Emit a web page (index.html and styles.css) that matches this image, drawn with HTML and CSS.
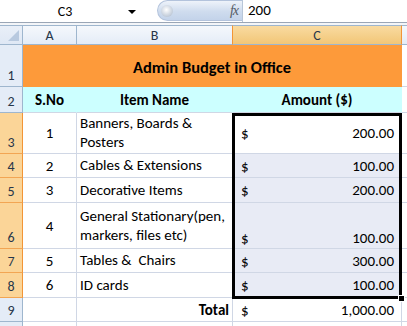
FILE: index.html
```html
<!DOCTYPE html>
<html>
<head>
<meta charset="utf-8">
<link rel="stylesheet" href="styles.css">
</head>
<body>
<div class="app">
  <div class="fbar">
    <div class="namebox"><span class="ref">C3</span><span class="arrow"></span></div>
    <div class="fxbtn"><span class="knob"></span><span class="fx">fx</span></div>
    <div class="formula">200</div>
  </div>
  <div class="gap"></div>
  <div class="stack">
  <div class="sheet">
    <div class="corner"><span class="tri"></span></div>
    <div class="ch">A</div>
    <div class="ch">B</div>
    <div class="ch sel">C</div>
    <div class="ch last"></div>

    <div class="rh">1</div>
    <div class="cell title">Admin Budget in Office</div>
    <div class="cell blank"></div>

    <div class="rh">2</div>
    <div class="cell hdr ctr">S.No</div>
    <div class="cell hdr ctr">Item Name</div>
    <div class="cell hdr ctr">Amount ($)</div>
    <div class="cell blank"></div>

    <div class="rh sel">3</div>
    <div class="cell ctr">1</div>
    <div class="cell txt">Banners, Boards &amp;<br>Posters</div>
    <div class="cell money active"><span>$</span><span>200.00</span></div>
    <div class="cell blank"></div>

    <div class="rh sel">4</div>
    <div class="cell ctr">2</div>
    <div class="cell txt">Cables &amp; Extensions</div>
    <div class="cell money inrange"><span>$</span><span>100.00</span></div>
    <div class="cell blank"></div>

    <div class="rh sel">5</div>
    <div class="cell ctr">3</div>
    <div class="cell txt">Decorative Items</div>
    <div class="cell money inrange"><span>$</span><span>200.00</span></div>
    <div class="cell blank"></div>

    <div class="rh sel">6</div>
    <div class="cell ctr">4</div>
    <div class="cell txt">General Stationary(pen,<br>markers, files etc)</div>
    <div class="cell money inrange bottom"><span>$</span><span>100.00</span></div>
    <div class="cell blank"></div>

    <div class="rh sel">7</div>
    <div class="cell ctr">5</div>
    <div class="cell txt">Tables &amp;&nbsp; Chairs</div>
    <div class="cell money inrange"><span>$</span><span>300.00</span></div>
    <div class="cell blank"></div>

    <div class="rh sel">8</div>
    <div class="cell ctr">6</div>
    <div class="cell txt">ID cards</div>
    <div class="cell money inrange"><span>$</span><span>100.00</span></div>
    <div class="cell blank"></div>

    <div class="rh">9</div>
    <div class="cell"></div>
    <div class="cell total">Total</div>
    <div class="cell money"><span>$</span><span>1,000.00</span></div>
    <div class="cell blank"></div>

    <div class="rh"></div>
    <div class="cell"></div>
    <div class="cell"></div>
    <div class="cell"></div>
    <div class="cell blank"></div>
  </div>
  <div class="sheet overlay">
    <div class="selbox"><span class="handle"></span></div>
  </div>
  </div>
</div>
</body>
</html>
```
FILE: styles.css
```css
* { box-sizing: border-box; }
html, body { margin: 0; padding: 0; background: #fff; }
.app {
  width: 407px; height: 326px; overflow: hidden;
  font-family: "Carlito", "Lato", "Liberation Sans", sans-serif;
  font-size: 15px; color: #000;
}
.fbar {
  display: flex; height: 22px;
  background: #fff;
}
.namebox {
  width: 152px; position: relative;
  display: flex; align-items: center;
  padding-right: 16px;
}
.ref { flex: 1; text-align: center; font-size: 14px; padding-left: 2px; }
.arrow {
  width: 0; height: 0;
  border-left: 4px solid transparent; border-right: 4px solid transparent;
  border-top: 4px solid #000;
  margin-top: 2px;
}
.fxbtn {
  width: 85px; margin-left: 5px; height: 21px;
  border-radius: 11px 0 0 11px;
  background: linear-gradient(#eef3fa, #cfdcee 55%, #c3d3ea);
  border: 1px solid #b3c3dc; border-right: none;
  display: flex; align-items: center; justify-content: space-between;
  padding: 0 4px 0 3px;
}
.knob {
  width: 12px; height: 12px; border-radius: 50%;
  background: radial-gradient(circle at 45% 40%, #fff, #c9d2de 60%, #a9b5c6);
}
.fx {
  font-family: "Liberation Serif", serif; font-style: italic;
  font-size: 14px; color: #555c66; letter-spacing: -1px;
}
.formula {
  flex: 1; border-left: 1px solid #b8c6d8;
  padding-left: 5px; font-size: 15px; line-height: 21px;
}
.gap {
  height: 3px; border-top: 1px solid #9aa6b6; background: #f3f5f8;
}
.stack { display: grid; }
.stack > .sheet { grid-area: 1 / 1; }
.sheet {
  display: grid;
  grid-template-columns: 23px 54px 156px 169px 5px;
  grid-template-rows: 20px 42px 26px 41px 24px 25px 46px 24px 25px 24px 10px;
}
.overlay { pointer-events: none; }
.corner {
  background: linear-gradient(#e9eff8, #dfe8f5);
  border-right: 1px solid #9eb6ce; border-bottom: 1px solid #9eb6ce;
  border-top: 1px solid #9eb6ce;
  position: relative;
}
.tri {
  position: absolute; right: 3px; bottom: 3px;
  width: 0; height: 0;
  border-left: 11px solid transparent;
  border-bottom: 11px solid #b8c9df;
}
.ch {
  background: linear-gradient(#f5f8fc, #e4ecf7);
  border-right: 1px solid #9eb6ce; border-bottom: 1px solid #9eb6ce;
  border-top: 1px solid #9eb6ce;
  display: flex; align-items: center; justify-content: center;
  font-size: 14px; color: #27364a;
}
.ch.sel {
  background: linear-gradient(#f9dba1, #f2c677);
  border-right-color: #f29536; border-left: 1px solid #f29536;
  margin-left: -1px;
}
.ch.last { border-right: none; }
.rh {
  background: #e4ecf7;
  border-right: 1px solid #9eb6ce; border-bottom: 1px solid #9eb6ce;
  display: flex; align-items: flex-end; justify-content: center;
  padding-bottom: 2px; font-size: 14px; color: #27364a;
}
.rh.sel {
  background: #fbd598;
  border-right-color: #f29536; border-bottom-color: #f2a553;
}
.cell {
  border-right: 1px solid #d0d7e5; border-bottom: 1px solid #d0d7e5;
  display: flex; align-items: center;
}
.cell.blank { border-right: none; }
.title {
  grid-column: 2 / 5;
  background: #fd9a3a;
  border-color: #fd9a3a;
  justify-content: center; font-weight: bold; font-size: 16.5px;
  padding-top: 2px;
}
.hdr { background: #ccffff; font-weight: bold; border-right-color: #ccffff; }
.ctr { justify-content: center; }
.txt { padding-left: 3px; line-height: 19px; }
.money { justify-content: space-between; padding: 0 7px 0 8px; }
.money.bottom { align-items: flex-end; padding-bottom: 1px; }
.inrange { background: #e8ebf5; }
.total { justify-content: flex-end; font-weight: bold; padding-right: 3px; }
.selbox {
  grid-column: 4 / 5; grid-row: 4 / 10;
  margin-left: -1px; margin-bottom: -1px;
  border: 3px solid #000;
  position: relative;
}
.handle {
  position: absolute; right: -6px; bottom: -6px;
  width: 7px; height: 7px; background: #000;
  border: 1px solid #fff;
}
```
